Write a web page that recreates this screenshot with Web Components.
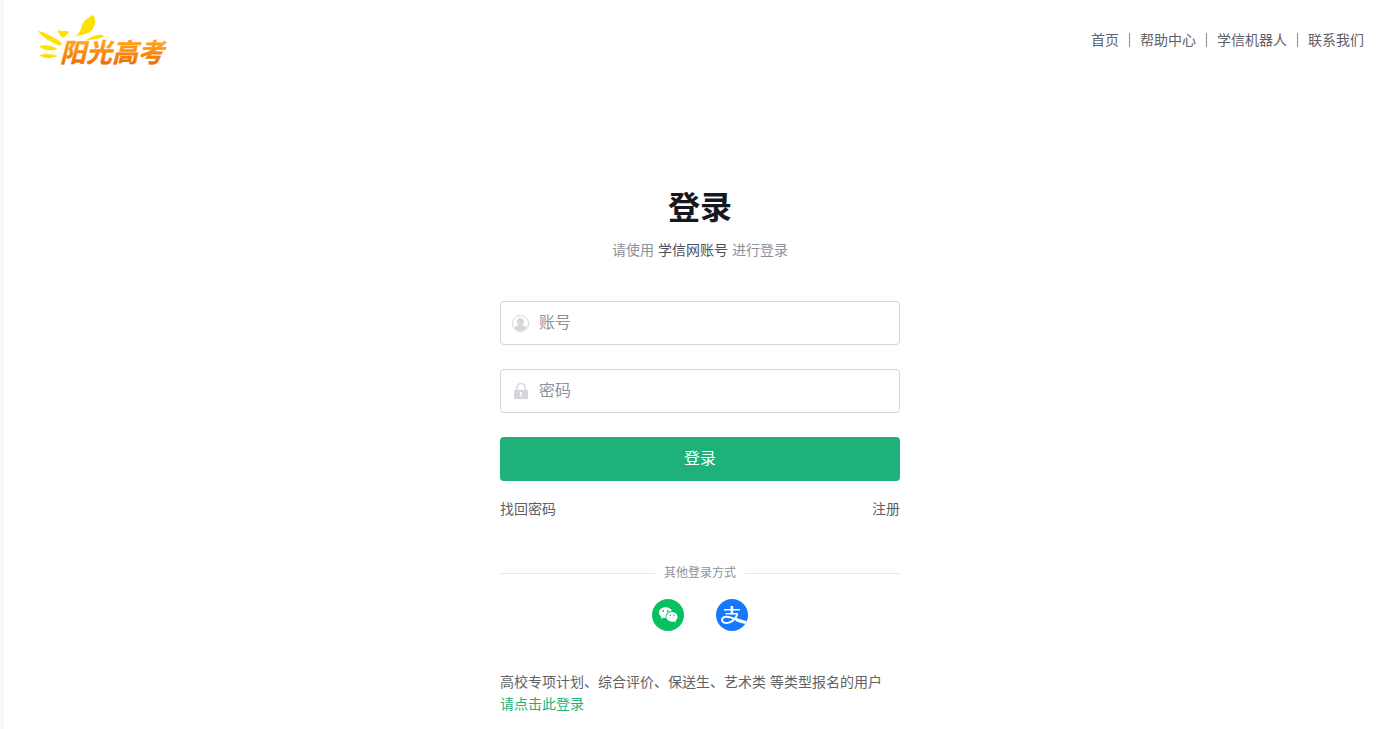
<!DOCTYPE html>
<html lang="zh-CN">
<head>
<meta charset="utf-8">
<title>登录 - 阳光高考</title>
<style>
body { margin: 0; background: #fff; color: #5d6066; font: 14px/22px "Liberation Sans", "Noto Sans CJK SC", sans-serif; }
</style>
</head>
<body>
<login-page></login-page>

<script>
class BaseElement extends HTMLElement {
  constructor() {
    super();
    this.attachShadow({ mode: 'open' }).innerHTML = this.render();
  }
}

customElements.define('site-logo', class extends BaseElement {
  render() {
    return `
<style>
:host { display: block; }
a { display: block; }
svg { display: block; }
text { font: italic 700 26px "Noto Sans CJK SC", sans-serif; }
</style>
<a href="#" aria-label="阳光高考">
<svg width="136" height="60" viewBox="0 0 136 60">
  <defs>
    <linearGradient id="g" x1="0" y1="0" x2="0" y2="1">
      <stop offset="0.3" stop-color="#ffa31a"/>
      <stop offset="0.9" stop-color="#f06a00"/>
    </linearGradient>
  </defs>
  <g fill="#ffe100">
    <path d="M59 5C62 9 62 15 58 20C54 25 47 24 41 27C45 23 47 20 48 15C50 10 54 8 59 5Z"/>
    <path d="M24 20C28 22 31 20 35 21.500C35 24 32 25 30 28C27 27 24 24 24 20Z"/>
    <path d="M4 21C11 22 21 28 28 33L26 36C17 32 9 28 4 21Z"/>
    <path d="M5 36C12 34 18 36 24 39C17 41 9 41 5 36Z"/>
    <path d="M5 45C12 43 18 44 24 46C17 49 10 49 5 45Z"/>
    <path d="M51 31C57 26 66 23 70 26C68 29 60 29 51 31Z"/>
  </g>
  <text x="26" y="52" fill="url(#g)" stroke="url(#g)" stroke-width="0.400">阳光高考</text>
</svg>
</a>`;
  }
});

customElements.define('site-nav', class extends BaseElement {
  render() {
    return `
<style>
:host { display: block; }
nav { display: flex; align-items: center; gap: 10px; }
a { color: inherit; text-decoration: none; }
i { width: 1px; height: 14px; background: #8c8f96; }
</style>
<nav><a href="#">首页</a><i></i><a href="#">帮助中心</a><i></i><a href="#">学信机器人</a><i></i><a href="#">联系我们</a></nav>`;
  }
});

customElements.define('login-field', class extends HTMLElement {
  connectedCallback() {
    const text = this.getAttribute('label');
    const type = this.getAttribute('type');
    this.attachShadow({ mode: 'open' }).innerHTML = `
<style>
:host { display: block; margin-bottom: 24px; }
label { display: flex; align-items: center; gap: 9px; box-sizing: border-box; height: 44px; padding: 0 11px; border: 1px solid #d4d6da; border-radius: 4px; background: #fff; }
input { flex: 1; min-width: 0; height: 24px; padding: 0; border: 0; outline: 0; background: none; color: #15181e; font: 16px/24px "Liberation Sans", "Noto Sans CJK SC", sans-serif; }
input::placeholder { color: #8c919d; opacity: 1; }
</style>
<label><slot></slot><input type="${type}" placeholder="${text}" aria-label="${text}"></label>`;
  }
});

customElements.define('other-login', class extends BaseElement {
  render() {
    return `
<style>
:host { display: block; }
.title { display: flex; align-items: center; gap: 9px; color: #8c919d; font-size: 12px; line-height: 22px; }
.title::before, .title::after { content: ""; flex: 1; height: 1px; background: #e6e7ea; }
.icons { display: flex; justify-content: center; gap: 32px; margin-top: 15px; }
a, svg { display: block; }
</style>
<div class="title"><span>其他登录方式</span></div>
<div class="icons">
  <a href="#" aria-label="微信登录"><svg width="32" height="32" viewBox="0 0 32 32">
    <circle cx="16" cy="16" r="16" fill="#07c160"/>
    <path d="M13.500 8.200C9.900 8.200 7 10.600 7 13.600C7 15.300 8 16.900 9.500 17.900L8.900 20L11.300 18.800C12.100 19 12.800 19.100 13.600 19.100C13 15.200 16 12.200 20 12.100C19.300 9.800 16.600 8.200 13.500 8.200Z" fill="#fff"/>
    <path d="M20 12.900C16.700 12.900 14.300 15.100 14.300 17.800C14.300 20.600 16.900 22.700 20 22.700C20.700 22.700 21.400 22.600 22 22.400L23.900 23.400L23.400 21.700C24.700 20.800 25.500 19.400 25.500 17.800C25.500 15.100 23 12.900 20 12.900Z" fill="#fff"/>
    <g fill="#07c160"><circle cx="11.300" cy="12" r="0.900"/><circle cx="15.700" cy="12" r="0.900"/><circle cx="18.200" cy="16.300" r="0.800"/><circle cx="21.900" cy="16.300" r="0.800"/></g>
  </svg></a>
  <a href="#" aria-label="支付宝登录"><svg width="32" height="32" viewBox="0 0 32 32">
    <clipPath id="c"><circle cx="16" cy="16" r="16"/></clipPath>
    <circle cx="16" cy="16" r="16" fill="#1677ff"/>
    <g clip-path="url(#c)" fill="none" stroke="#fff">
      <path d="M15.900 7V15.300" stroke-width="2.500"/>
      <path d="M8 10.700H24M9.500 14.700H21.500" stroke-width="1.500"/>
      <path d="M21.500 14.500C20 20 15.500 24 11 24C4.500 24 4.500 18 10.500 17.700C15.500 17.500 21 21.500 31 24" stroke-width="1.900"/>
      <path d="M20 20.500Q25 22.500 33 24.300" stroke-width="3"/>
    </g>
  </svg></a>
</div>`;
  }
});

customElements.define('login-form', class extends BaseElement {
  render() {
    return `
<style>
:host { display: block; width: 100%; max-width: 400px; }
h1 { margin: 0; color: #15181e; text-align: center; font-size: 32px; line-height: 48px; font-weight: 700; }
.sub { display: flex; justify-content: center; gap: 4px; margin: 7px 0 40px; color: #8c919d; }
.sub b { color: #4d5058; font-weight: 400; }
svg { display: block; flex: none; }
button { display: block; width: 100%; height: 44px; padding: 0; border: 0; border-radius: 4px; background: #1eb179; color: #fff; font: 16px/24px "Liberation Sans", "Noto Sans CJK SC", sans-serif; cursor: pointer; }
a { color: inherit; text-decoration: none; }
.links { display: flex; justify-content: space-between; margin: 17px 0 42px; }
.note { margin: 40px 0 0; color: #5f6366; }
.note a { display: block; color: #1eb179; }
</style>
<form>
  <h1>登录</h1>
  <p class="sub"><span>请使用</span><b>学信网账号</b><span>进行登录</span></p>
  <login-field label="账号" type="text">
    <svg width="18" height="18" viewBox="0 0 18 18"><circle cx="8.500" cy="9.500" r="8" fill="none" stroke="#d4d6da"/><circle cx="8.500" cy="7.500" r="3.600" fill="#d4d6da"/><path d="M2.500 14C2.800 12 5 11.800 7 11.300V10H10V11.300C12 11.800 14.200 12 14.500 14C11.200 18 5.800 18 2.500 14Z" fill="#d4d6da"/></svg>
  </login-field>
  <login-field label="密码" type="password">
    <svg width="18" height="18" viewBox="0 0 18 18"><path d="M5 9V5.500C5 .3 13 .3 13 5.500V9" fill="none" stroke="#d4d6da" stroke-width="1.400"/><rect x="2" y="8" width="14" height="9" rx="0.500" fill="#d4d6da"/><path d="M9 10A1.300 1.300 0 0 1 9.600 12.400V15H8.400V12.400A1.300 1.300 0 0 1 9 10Z" fill="#fff"/></svg>
  </login-field>
  <button type="button">登录</button>
  <div class="links"><a href="#">找回密码</a><a href="#">注册</a></div>
  <other-login></other-login>
  <p class="note">高校专项计划、综合评价、保送生、艺术类 等类型报名的用户<a href="#">请点击此登录</a></p>
</form>`;
  }
});

customElements.define('login-page', class extends BaseElement {
  render() {
    return `
<style>
:host { display: block; box-sizing: border-box; min-height: 100vh; border-left: 4px solid #f6f8f8; }
header { display: flex; align-items: center; justify-content: space-between; height: 80px; padding: 0 30px; }
main { display: flex; justify-content: center; padding: 104px 0 14px 2px; }
</style>
<header><site-logo></site-logo><site-nav></site-nav></header>
<main><login-form></login-form></main>`;
  }
});
</script>
</body>
</html>
